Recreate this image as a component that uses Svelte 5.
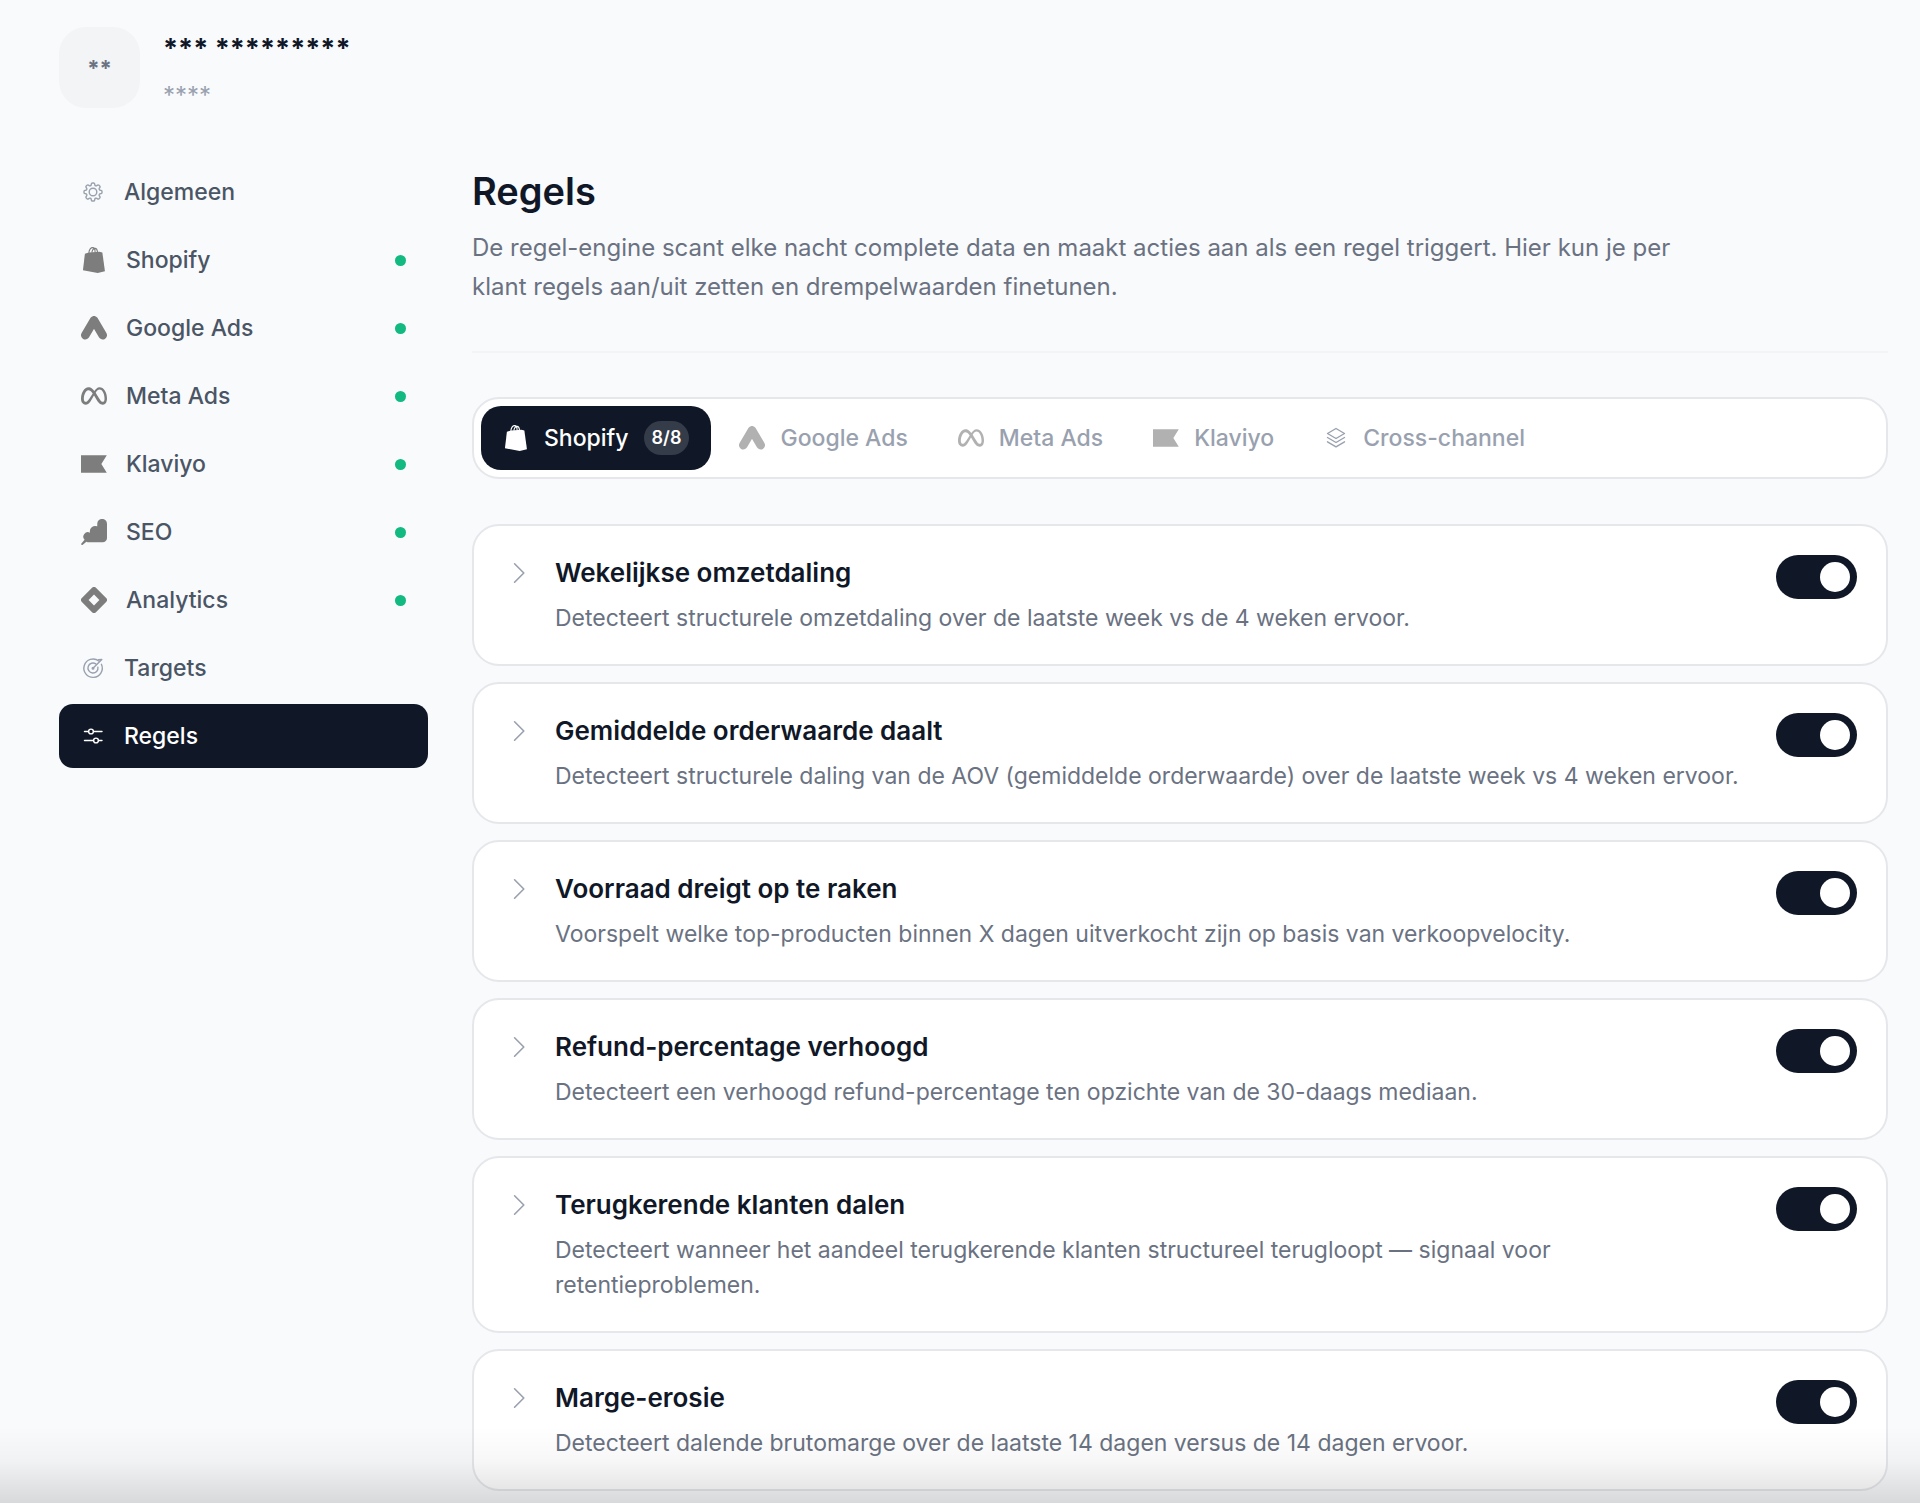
<script lang="ts">
	type IconName = 'gear' | 'shopify' | 'google' | 'meta' | 'klaviyo' | 'seo' | 'analytics' | 'target' | 'sliders' | 'layers';

	const brands: IconName[] = ['shopify', 'google', 'meta', 'klaviyo', 'seo', 'analytics'];

	const navItems: { label: string; icon: IconName; connected?: boolean }[] = [
		{ label: 'Algemeen', icon: 'gear' },
		{ label: 'Shopify', icon: 'shopify', connected: true },
		{ label: 'Google Ads', icon: 'google', connected: true },
		{ label: 'Meta Ads', icon: 'meta', connected: true },
		{ label: 'Klaviyo', icon: 'klaviyo', connected: true },
		{ label: 'SEO', icon: 'seo', connected: true },
		{ label: 'Analytics', icon: 'analytics', connected: true },
		{ label: 'Targets', icon: 'target' },
		{ label: 'Regels', icon: 'sliders' }
	];

	const tabs: { label: string; icon: IconName; count?: string }[] = [
		{ label: 'Shopify', icon: 'shopify', count: '8/8' },
		{ label: 'Google Ads', icon: 'google' },
		{ label: 'Meta Ads', icon: 'meta' },
		{ label: 'Klaviyo', icon: 'klaviyo' },
		{ label: 'Cross-channel', icon: 'layers' }
	];

	let activeNav = $state('Regels');
	let activeTab = $state('Shopify');

	let rules = $state([
		{
			id: 'omzet',
			title: 'Wekelijkse omzetdaling',
			text: 'Detecteert structurele omzetdaling over de laatste week vs de 4 weken ervoor.',
			enabled: true
		},
		{
			id: 'aov',
			title: 'Gemiddelde orderwaarde daalt',
			text: 'Detecteert structurele daling van de AOV (gemiddelde orderwaarde) over de laatste week vs 4 weken ervoor.',
			enabled: true
		},
		{
			id: 'voorraad',
			title: 'Voorraad dreigt op te raken',
			text: 'Voorspelt welke top-producten binnen X dagen uitverkocht zijn op basis van verkoopvelocity.',
			enabled: true
		},
		{
			id: 'refund',
			title: 'Refund-percentage verhoogd',
			text: 'Detecteert een verhoogd refund-percentage ten opzichte van de 30-daags mediaan.',
			enabled: true
		},
		{
			id: 'retentie',
			title: 'Terugkerende klanten dalen',
			text: 'Detecteert wanneer het aandeel terugkerende klanten structureel terugloopt — signaal voor retentieproblemen.',
			enabled: true
		},
		{
			id: 'marge',
			title: 'Marge-erosie',
			text: 'Detecteert dalende brutomarge over de laatste 14 dagen versus de 14 dagen ervoor.',
			enabled: true
		}
	]);
</script>

{#snippet icon(name: IconName)}
	<svg class="icon" class:brand={brands.includes(name)} viewBox="0 0 24 24" aria-hidden="true">
		{#if name === 'gear'}
			<g class="line">
				<path d="M10.343 3.94c.09-.542.56-.94 1.11-.94h1.093c.55 0 1.02.398 1.11.94l.149.894c.07.424.384.764.78.93.398.164.855.142 1.205-.108l.737-.527a1.125 1.125 0 0 1 1.45.12l.773.774c.39.389.44 1.002.12 1.45l-.527.737c-.25.35-.272.806-.107 1.204.165.397.505.71.93.78l.893.15c.543.09.94.559.94 1.109v1.094c0 .55-.397 1.02-.94 1.11l-.894.149c-.424.07-.764.383-.929.78-.165.398-.143.854.107 1.204l.527.738c.32.447.269 1.06-.12 1.45l-.774.773a1.125 1.125 0 0 1-1.449.12l-.738-.527c-.35-.25-.806-.272-1.203-.107-.398.165-.71.505-.781.929l-.149.894c-.09.542-.56.94-1.11.94h-1.094c-.55 0-1.019-.398-1.11-.94l-.148-.894c-.071-.424-.384-.764-.781-.93-.398-.164-.854-.142-1.204.108l-.738.527c-.447.32-1.06.269-1.45-.12l-.773-.774a1.125 1.125 0 0 1-.12-1.45l.527-.737c.25-.35.272-.806.108-1.204-.165-.397-.506-.71-.93-.78l-.894-.15c-.542-.09-.94-.56-.94-1.109v-1.094c0-.55.398-1.02.94-1.11l.894-.149c.424-.07.765-.383.93-.78.165-.398.143-.854-.108-1.204l-.526-.738a1.125 1.125 0 0 1 .12-1.45l.773-.773a1.125 1.125 0 0 1 1.45-.12l.737.527c.35.25.807.272 1.204.107.397-.165.71-.505.78-.929l.15-.894Z" />
				<circle cx="12" cy="12" r="3.8" />
			</g>
		{:else if name === 'shopify'}
			<path d="M3.6 6.2 7.2 5.1 17 4.4l2.7.6 2.4 17.4L15.4 24 1.8 21.4Z" />
			<path class="handle" d="M7.2 5.4C7.6 2.6 9.2.6 10.8.6c1.7 0 2.2 1.6 2.2 4M10 5.2C10.4 2.8 11.6 1.3 13 1.3c1.5 0 2 1.4 2.2 3.3" />
		{:else if name === 'google'}
			<path class="thick" d="M12 5 4 18.6M12 5l8 13.6" />
		{:else if name === 'meta'}
			<path d="M6.915 4.03c-1.968 0-3.683 1.28-4.871 3.113C.704 9.208 0 11.883 0 14.449c0 .706.07 1.369.21 1.973a6.624 6.624 0 0 0 .265.86 5.297 5.297 0 0 0 .371.761c.696 1.159 1.818 1.927 3.593 1.927 1.497 0 2.633-.671 3.965-2.444.76-1.012 1.144-1.626 2.663-4.32l.756-1.339.186-.325c.061.1.121.196.183.3l2.152 3.595c.724 1.21 1.665 2.556 2.47 3.314 1.046.987 1.992 1.22 3.06 1.22 1.075 0 1.876-.355 2.455-.843a3.743 3.743 0 0 0 .81-.973c.542-.939.861-2.127.861-3.745 0-2.72-.681-5.357-2.084-7.45-1.282-1.912-2.957-2.93-4.716-2.93-1.047 0-2.088.467-3.053 1.308-.652.57-1.257 1.29-1.82 2.05-.69-.875-1.335-1.547-1.958-2.056-1.182-.966-2.315-1.303-3.454-1.303zm10.16 2.053c1.147 0 2.188.758 2.992 1.999 1.132 1.748 1.647 4.195 1.647 6.4 0 1.548-.368 2.9-1.839 2.9-.58 0-1.027-.23-1.664-1.004-.496-.601-1.343-1.878-2.832-4.358l-.617-1.028a44.908 44.908 0 0 0-1.255-1.98c.07-.109.141-.224.211-.327 1.12-1.667 2.118-2.602 3.358-2.602zm-10.201.553c1.265 0 2.058.791 2.675 1.446.307.327.737.871 1.234 1.579l-1.02 1.566c-.757 1.163-1.882 3.017-2.837 4.338-1.191 1.649-1.81 1.817-2.486 1.817-.524 0-1.038-.237-1.383-.794-.263-.426-.464-1.13-.464-2.046 0-2.221.63-4.535 1.66-6.088.454-.687.964-1.226 1.533-1.533a2.264 2.264 0 0 1 1.088-.285z" />
		{:else if name === 'klaviyo'}
			<path d="M0 4h23.8l-5 8 5 8H0Z" />
		{:else if name === 'seo'}
			<path d="M15 4.4a4.5 4.5 0 0 1 9 0V17.5a4 4 0 0 1-4 4H7.6a4.2 4.2 0 0 1-2.6-.6L1.6 23.7a.8.8 0 0 1-1.2-1.1L3.3 19.2A4.2 4.2 0 0 1 8.3 12.6 5 5 0 0 1 15 6.8Z" />
		{:else if name === 'analytics'}
			<path fill-rule="evenodd" d="M10.2.8a2.5 2.5 0 0 1 3.6 0l9.4 9.4a2.5 2.5 0 0 1 0 3.6l-9.4 9.4a2.5 2.5 0 0 1-3.6 0L.8 13.8a2.5 2.5 0 0 1 0-3.6ZM12 7l-5 5 5 5 5-5Z" />
		{:else if name === 'target'}
			<g class="line">
				<path d="M17.8 5A9.2 9.2 0 1 0 20.4 8.3" />
				<path d="M14.8 7.9A5 5 0 1 0 16.9 11.2" />
				<path d="M12 12.2 20.8 3.4M20.8 3.4l-3.4.4" />
				<circle cx="12" cy="12.2" r=".8" />
			</g>
		{:else if name === 'sliders'}
			<g class="line">
				<path d="M3.5 7.5h4M12.5 7.5h8.5M3.5 16.5h9M17.5 16.5h3.5" />
				<circle cx="10" cy="7.5" r="2.4" />
				<circle cx="15" cy="16.5" r="2.4" />
			</g>
		{:else}
			<g class="line">
				<path d="M12 2.5 20.5 7.5 12 12.5 3.5 7.5Z" />
				<path d="M3.5 11.5 12 16.5l8.5-5M3.5 15.8 12 20.8l8.5-5" />
			</g>
		{/if}
	</svg>
{/snippet}

<div class="page">
	<header class="client">
		<div class="avatar">**</div>
		<div class="client-info">
			<strong>*** *********</strong>
			<span>****</span>
		</div>
	</header>

	<div class="layout">
		<nav class="sidebar" aria-label="Instellingen">
			{#each navItems as item}
				<button
					class="nav-item"
					class:active={activeNav === item.label}
					onclick={() => (activeNav = item.label)}
				>
					{@render icon(item.icon)}
					<span class="nav-label">{item.label}</span>
					{#if item.connected}
						<span class="dot"></span>
					{/if}
				</button>
			{/each}
		</nav>

		<main>
			<div class="intro">
				<h1>Regels</h1>
				<p>
					De regel-engine scant elke nacht complete data en maakt acties aan als een regel triggert. Hier kun je per
					klant regels aan/uit zetten en drempelwaarden finetunen.
				</p>
			</div>

			<div class="tabs" role="tablist">
				{#each tabs as tab}
					<button
						class="tab"
						class:active={activeTab === tab.label}
						role="tab"
						aria-selected={activeTab === tab.label}
						onclick={() => (activeTab = tab.label)}
					>
						{@render icon(tab.icon)}
						<span>{tab.label}</span>
						{#if tab.count}
							<span class="count">{tab.count}</span>
						{/if}
					</button>
				{/each}
			</div>

			<div class="rules">
				{#each rules as rule (rule.id)}
					<section class="rule">
						<button class="expand" aria-label="Details van {rule.title}">
							<svg viewBox="0 0 24 24" aria-hidden="true">
								<path d="m7 3.5 8.5 8.5L7 20.5" />
							</svg>
						</button>
						<div class="rule-body">
							<label for={rule.id}>{rule.title}</label>
							<p>{rule.text}</p>
						</div>
						<input id={rule.id} class="switch" type="checkbox" role="switch" bind:checked={rule.enabled} />
					</section>
				{/each}
			</div>
		</main>
	</div>

	<div class="fade"></div>
</div>

<style>
	:global(body) {
		background: #f9fafc;
	}

	.page {
		padding: 27px 32px 12px 59px;
		font-family: Inter, 'Liberation Sans', sans-serif;
		color: #101828;
	}

	button {
		border: 0;
		background: none;
		font: inherit;
		cursor: pointer;
	}

	.client {
		display: flex;
		align-items: flex-start;
		gap: 23px;
		margin-bottom: 52px;
	}

	.avatar {
		display: grid;
		place-items: center;
		width: 81px;
		height: 81px;
		border-radius: 27px;
		background: #f3f4f6;
		color: #6a7282;
		font-size: 22px;
		font-weight: 700;
	}

	.client-info {
		display: flex;
		flex-direction: column;
		gap: 16px;
		padding-top: 3px;
	}

	.client-info strong {
		font-size: 27px;
		font-weight: 700;
		line-height: 38px;
	}

	.client-info span {
		color: #99a1af;
		font-size: 24px;
		line-height: 24px;
	}

	.layout {
		display: grid;
		grid-template-columns: 369px minmax(0, 1fr);
		align-items: start;
		gap: 44px;
	}

	.sidebar {
		display: flex;
		flex-direction: column;
		gap: 4px;
	}

	.nav-item {
		display: flex;
		align-items: center;
		gap: 19px;
		height: 64px;
		padding: 0 22px;
		border-radius: 14px;
		color: #4a5565;
		font-size: 23px;
		font-weight: 500;
		text-align: left;
	}

	.nav-item.active {
		background: #101828;
		color: #fff;
	}

	.nav-label {
		flex: 1;
	}

	.dot {
		width: 11px;
		height: 11px;
		border-radius: 50%;
		background: #12b981;
	}

	.icon {
		flex: none;
		width: 24px;
		height: 24px;
		fill: currentColor;
		color: #99a1af;
	}

	.icon.brand {
		width: 26px;
		height: 26px;
		color: #7d7d7d;
	}

	.active .icon {
		color: #fff;
	}

	.line {
		fill: none;
		stroke: currentColor;
		stroke-width: 1.4;
		stroke-linecap: round;
		stroke-linejoin: round;
	}

	.thick {
		fill: none;
		stroke: currentColor;
		stroke-width: 8;
		stroke-linecap: round;
		stroke-linejoin: round;
	}

	.handle {
		fill: none;
		stroke: currentColor;
	}

	.intro {
		padding-bottom: 45px;
		border-bottom: 2px solid #f3f4f6;
	}

	h1 {
		margin: 0;
		font-size: 38px;
		font-weight: 600;
		line-height: 62px;
	}

	.intro p {
		max-width: 1210px;
		margin: 6px 0 0;
		color: #6a7282;
		font-size: 24px;
		line-height: 39px;
	}

	.tabs {
		display: flex;
		gap: 6px;
		margin-top: 44px;
		padding: 7px;
		border: 2px solid #e5e7eb;
		border-radius: 27px;
		background: #fff;
	}

	.tab {
		display: flex;
		align-items: center;
		gap: 15px;
		height: 64px;
		padding: 0 22px;
		border-radius: 20px;
		color: #99a1af;
		font-size: 23px;
		font-weight: 500;
	}

	.tab.active {
		background: #101828;
		color: #fff;
	}

	.tab:not(.active) .brand {
		color: #b1b1b1;
	}

	.count {
		padding: 0 8px;
		border-radius: 17px;
		background: #343b49;
		font-size: 18px;
		font-weight: 600;
		line-height: 34px;
	}

	.rules {
		display: flex;
		flex-direction: column;
		gap: 16px;
		margin-top: 45px;
	}

	.rule {
		display: flex;
		align-items: flex-start;
		padding: 29px 29px 28px;
		border: 2px solid #e5e7eb;
		border-radius: 27px;
		background: #fff;
	}

	.expand {
		flex: none;
		margin: 5px 22px 0 4px;
		padding: 0;
		width: 26px;
		height: 26px;
	}

	.expand svg {
		display: block;
		width: 26px;
		height: 26px;
		fill: none;
		stroke: #99a1af;
		stroke-width: 1.5;
		stroke-linecap: round;
		stroke-linejoin: round;
	}

	.rule-body {
		flex: 1;
		padding-right: 30px;
	}

	.rule label {
		display: block;
		font-size: 26px;
		font-weight: 600;
		line-height: 36px;
		cursor: pointer;
	}

	.rule p {
		margin: 10px 0 0;
		color: #6a7282;
		font-size: 23px;
		line-height: 35px;
	}

	.switch {
		appearance: none;
		flex: none;
		box-sizing: border-box;
		display: flex;
		width: 81px;
		height: 44px;
		margin: 0;
		padding: 7px;
		border-radius: 22px;
		background: #d1d5dc;
		cursor: pointer;
	}

	.switch::before {
		content: '';
		width: 30px;
		height: 30px;
		border-radius: 50%;
		background: #fff;
	}

	.switch:checked {
		justify-content: flex-end;
		background: #101828;
	}

	.fade {
		position: fixed;
		right: 0;
		bottom: 0;
		left: 0;
		height: 76px;
		background: linear-gradient(to bottom, rgb(0 0 0 / 0), rgb(0 0 0 / 0.03) 45%, rgb(0 0 0 / 0.13));
		pointer-events: none;
	}
</style>
